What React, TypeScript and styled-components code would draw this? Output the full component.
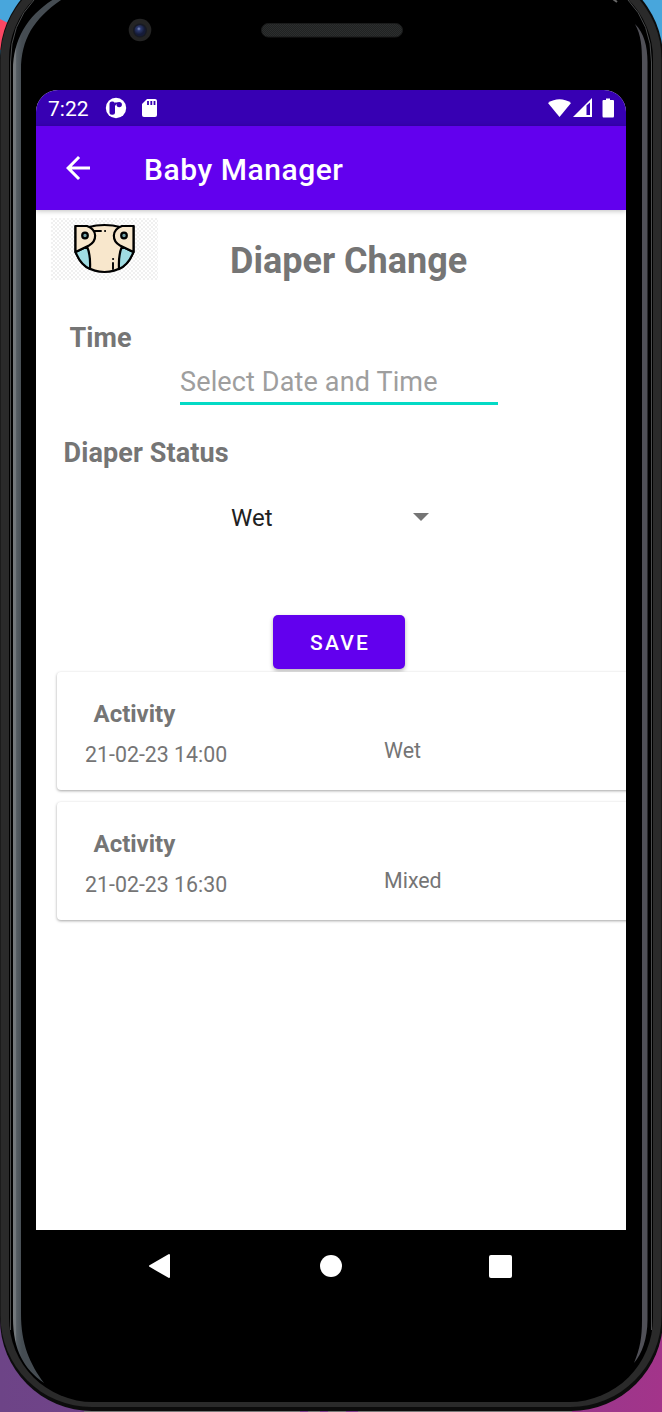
import React from "react";
import styled, { createGlobalStyle } from "styled-components";

const Global = createGlobalStyle`
  * { box-sizing: border-box; }
  html, body { margin: 0; padding: 0; background: #000; }
  body { font-family: Roboto, "Liberation Sans", sans-serif; overflow: hidden; }
`;

const Stage = styled.div`
  position: relative;
  width: 662px;
  height: 1412px;
  overflow: hidden;
`;

const Shell = styled.svg`
  position: absolute;
  inset: 0;
  z-index: 0;
`;

const Device = styled.div`
  position: relative;
  z-index: 1;
  width: 590px;
  margin-left: 36px;
  display: flex;
  flex-direction: column;
`;

const Forehead = styled.div`
  height: 90px;
  flex: none;
`;

const Screen = styled.main`
  height: 1140px;
  background: #fff;
  border-radius: 22px 22px 0 0;
  overflow: hidden;
  display: flex;
  flex-direction: column;
`;

const StatusBar = styled.div`
  height: 36px;
  flex: none;
  background: #3700b3;
  color: #fff;
  display: flex;
  align-items: center;
  padding: 0 10px 0 12px;
`;

const Clock = styled.span`
  font-size: 21px;
  line-height: 36px;
  width: 57px;
  padding-top: 1px;
`;

const Signals = styled.div`
  margin-left: auto;
  display: flex;
`;

const AppBar = styled.header`
  height: 84px;
  flex: none;
  background: #6200ee;
  color: #fff;
  display: flex;
  align-items: center;
  padding-left: 24px;
  box-shadow: 0 1px 5px rgba(0, 0, 0, 0.25);
`;

const Title = styled.h1`
  margin: 4px 0 0 48px;
  font-size: 30px;
  font-weight: 500;
  line-height: 36px;
  letter-spacing: 0.55px;
  white-space: nowrap;
`;

const Heading = styled.div`
  display: flex;
  height: 80px;
  padding: 8px 0 0 15px;
`;

const PageTitle = styled.h2`
  margin: 20.5px 0 0 72px;
  font-size: 36px;
  line-height: 44px;
  font-weight: 700;
  color: #757575;
  white-space: nowrap;
`;

const Label = styled.h3<{ $indent: number; $top: number }>`
  margin: ${(p) => p.$top}px 0 0 ${(p) => p.$indent}px;
  font-size: 27px;
  line-height: 32px;
  font-weight: 700;
  letter-spacing: 0.1px;
  color: #757575;
`;

const DateField = styled.div`
  width: 318px;
  height: 42px;
  margin: 9px 0 0 144px;
  padding-top: 1px;
  border-bottom: 3px solid #03dac5;
  font-size: 27px;
  line-height: 36px;
  letter-spacing: 0.14px;
  color: #9e9e9e;
  white-space: nowrap;
`;

const Picker = styled.div`
  width: 197.5px;
  height: 36px;
  margin: 31px 0 0 195px;
  display: flex;
  align-items: center;
  justify-content: space-between;
  font-size: 24px;
  line-height: 36px;
  color: #212121;
`;

const SaveButton = styled.button`
  width: 132px;
  height: 54px;
  margin: 79px 0 0 237px;
  padding: 2px 0 0 2px;
  flex: none;
  border: 0;
  border-radius: 5px;
  background: #6200ee;
  color: #fff;
  font: 500 21px/24px Roboto, sans-serif;
  letter-spacing: 2.2px;
  box-shadow: 0 2px 4px rgba(0, 0, 0, 0.3);
`;

const List = styled.div`
  display: flex;
  flex-direction: column;
  gap: 12px;
  margin: 3px -10px 0 21px;
`;

const Card = styled.article`
  height: 118px;
  border-radius: 4px;
  background: #fff;
  color: #757575;
  display: flex;
  padding: 26px 0 0 28px;
  box-shadow: 0 1px 3px rgba(0, 0, 0, 0.36);
`;

const Entry = styled.div`
  width: 299px;
`;

const EntryTitle = styled.div`
  padding-left: 8.5px;
  font-size: 24px;
  font-weight: 700;
  line-height: 32px;
`;

const EntryTime = styled.div`
  margin-top: 12px;
  font-size: 21.35px;
  line-height: 26px;
`;

const EntryStatus = styled.div`
  margin-top: 39.5px;
  font-size: 21.4px;
  line-height: 26px;
`;

const NavBar = styled.nav`
  height: 72px;
  display: grid;
  grid-template-columns: 173px 168px auto;
  align-items: center;
  padding-left: 111px;
`;

const records = [
  { time: "21-02-23 14:00", status: "Wet" },
  { time: "21-02-23 16:30", status: "Mixed" },
];

function PhoneShell() {
  return (
    <Shell width="662" height="1412" viewBox="0 0 662 1412">
      <defs>
        <linearGradient id="purple" x1="0" x2="1" y1="0" y2="0">
          <stop offset="0" stopColor="#6d4487" />
          <stop offset="0.5" stopColor="#7d4090" />
          <stop offset="1" stopColor="#a3348a" />
        </linearGradient>
        <linearGradient id="steel" x1="13" x2="22" y1="0" y2="0" gradientUnits="userSpaceOnUse">
          <stop offset="0" stopColor="#777b7e" />
          <stop offset="0.3" stopColor="#70767a" />
          <stop offset="0.4" stopColor="#555d63" />
          <stop offset="1" stopColor="#454c52" />
        </linearGradient>
        <radialGradient id="lens" cx="0.4" cy="0.35">
          <stop offset="0" stopColor="#8494c4" />
          <stop offset="0.35" stopColor="#2c396d" />
          <stop offset="1" stopColor="#151b38" />
        </radialGradient>
        <pattern id="mesh" width="2" height="2" patternUnits="userSpaceOnUse">
          <rect width="2" height="2" fill="#202222" />
          <path d="M0 0h1v1H0zM1 1h1v1H1z" fill="#2c2e2e" />
        </pattern>
      </defs>
      <rect width="662" height="706" fill="#48a6dc" />
      <path d="M0 19L8 23V50H0z" fill="#fb4763" />
      <rect y="706" width="662" height="706" fill="url(#purple)" />
      <rect x="0" y="-34" width="663" height="1445" rx="92" fill="#0c0c0c" />
      <path d="M84 1411.500H300M308 1411.500H320M328 1411.500H346M358 1411.500H572" stroke="#777" />
      <rect x="0.500" y="-32" width="661" height="1439" rx="91" fill="#2a2a2a" />
      <rect x="9" y="-25" width="644" height="1427" rx="84" fill="#000" />
      <path d="M10.500 1330V62Q10.500 24 34 0M651.500 1330V62Q651.500 24 628 0" fill="none" stroke="#4a4c4d" />
      <path d="M63 -6C31 10 13 36 13 70V1318C13 1350 24 1369 44 1383C30 1364 21 1344 21 1314V70C21 38 35 17 64 -2Z" fill="url(#steel)" />
      <path d="M635 24C644 33 647.500 46 647.500 62V1320C647.500 1338 642 1354 634 1363C640 1349 642 1337 642 1320V62C642 46 641 35 635 24Z" fill="#505057" />
      <path d="M609 -4L617 2" stroke="#666" strokeWidth="2" />
      <circle cx="140" cy="30" r="11.300" fill="#242424" />
      <circle cx="140" cy="30.500" r="7" fill="#171a24" />
      <circle cx="140" cy="30.500" r="5.500" fill="url(#lens)" />
      <rect x="261.500" y="23.500" width="141" height="13.500" rx="6.750" fill="url(#mesh)" stroke="#1a1b1b" />
    </Shell>
  );
}

function Diaper() {
  return (
    <svg width="107" height="62" viewBox="0 0 107 62">
      <defs>
        <pattern id="checks" width="4" height="4" patternUnits="userSpaceOnUse">
          <rect width="4" height="4" fill="#fff" />
          <path d="M0 0h2v2H0zM2 2h2v2H2z" fill="#f0f0f0" />
        </pattern>
      </defs>
      <rect width="107" height="62" fill="url(#checks)" />
      <g stroke="#000" strokeWidth="2.200" strokeLinejoin="round" strokeLinecap="round">
        <path d="M24.500 33C29 47 40 54 53.500 54S78 47 82.500 33V8L69 9C60 6.300 47 6.300 38 9L24.500 8Z" fill="#f8e7cc" />
        <path d="M24.500 34C28 43 32 48 39 51C39.500 41 38.500 34 36 28.500Z" fill="#a0dce2" />
        <path d="M82.500 34C79 43 75 48 68 51C67.500 41 68.500 34 71 28.500Z" fill="#a0dce2" />
        <path d="M24.500 8H36C47 12 46 23 38 27.500L24.500 34Z" fill="#f8e7cc" />
        <path d="M82.500 8H71C60 12 61 23 69 27.500L82.500 34Z" fill="#f8e7cc" />
        <circle cx="34" cy="17.500" r="2.800" fill="#719fa5" />
        <circle cx="73" cy="17.500" r="2.800" fill="#719fa5" />
        <path d="M43 13H50M54 13H54.200M62 41H62.200M62 45V51" fill="none" strokeWidth="1.900" />
      </g>
    </svg>
  );
}

export default function App() {
  return (
    <Stage>
      <Global />
      <PhoneShell />
      <Device>
        <Forehead />
        <Screen>
          <StatusBar>
            <Clock>7:22</Clock>
            <svg width="56" height="22" viewBox="0 0 56 22">
              <circle cx="11" cy="11" r="10.200" fill="#fff" />
              <rect x="4.500" y="4.500" width="5.500" height="13.300" rx="2.500" fill="#3700b3" />
              <path d="M10 5.500H13.500V7H11.500L10 9Z" fill="#3700b3" />
              <circle cx="14.200" cy="7.600" r="2.700" fill="#3700b3" />
              <path d="M42 2H50Q52 2 52 4V18Q52 20 50 20H39Q37 20 37 18V7Z" fill="#fff" />
              <path d="M43 4V8M46.300 4V8M49.500 4V8" stroke="#3700b3" strokeWidth="1.800" />
            </svg>
            <Signals>
              <svg width="68" height="22" viewBox="0 0 68 22">
                <path d="M0 6C7 1 16 1 23 6L11.500 20Z" fill="#fff" />
                <path d="M25 20L44 1V20Z" fill="#fff" />
                <path d="M38.500 8.500L42 5.500V18H38.500Z" fill="#3700b3" />
                <path d="M58 3V1.500H62V3H65Q66 3 66 4V19Q66 20.500 65 20.500H55.500Q54.500 20.500 54.500 19V4Q54.500 3 55.500 3Z" fill="#fff" />
              </svg>
            </Signals>
          </StatusBar>
          <AppBar>
            <svg width="36" height="36" viewBox="0 0 24 24" fill="#fff">
              <path d="M20 11H7.830l5.590-5.590L12 4l-8 8 8 8 1.410-1.410L7.830 13H20v-2z" />
            </svg>
            <Title>Baby Manager</Title>
          </AppBar>
          <Heading>
            <Diaper />
            <PageTitle>Diaper Change</PageTitle>
          </Heading>
          <Label $top={32} $indent={33.5}>Time</Label>
          <DateField>Select Date and Time</DateField>
          <Label $top={32} $indent={27.5}>Diaper Status</Label>
          <Picker>
            Wet
            <svg width="16" height="10" viewBox="0 0 16 10">
              <path d="M0 0H16L8 8Z" fill="#757575" />
            </svg>
          </Picker>
          <SaveButton>SAVE</SaveButton>
          <List>
            {records.map((r) => (
              <Card key={r.time}>
                <Entry>
                  <EntryTitle>Activity</EntryTitle>
                  <EntryTime>{r.time}</EntryTime>
                </Entry>
                <EntryStatus>{r.status}</EntryStatus>
              </Card>
            ))}
          </List>
        </Screen>
        <NavBar>
          <svg width="24" height="26" viewBox="0 0 24 26">
            <path d="M3 13L22 2V24Z" fill="#fff" stroke="#fff" strokeWidth="2" strokeLinejoin="round" />
          </svg>
          <svg width="22" height="22" viewBox="0 0 22 22">
            <circle cx="11" cy="11" r="11" fill="#fff" />
          </svg>
          <svg width="24" height="23" viewBox="0 0 24 23">
            <rect x="1" width="23" height="23" rx="2" fill="#fff" />
          </svg>
        </NavBar>
      </Device>
    </Stage>
  );
}
